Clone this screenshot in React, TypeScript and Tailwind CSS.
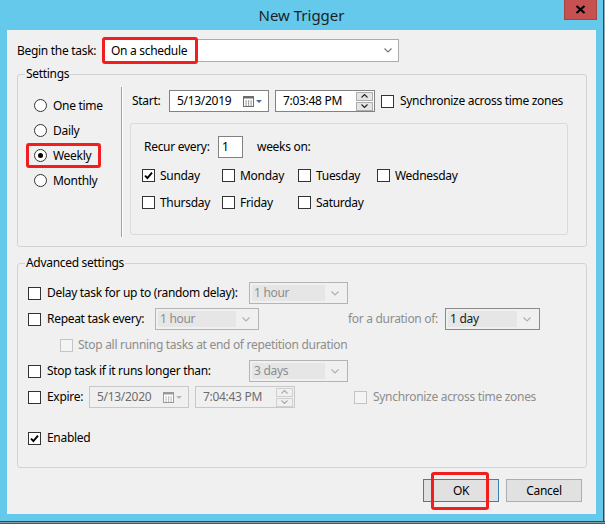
import clsx from "clsx"

const font = "font-['Segoe_UI','Noto_Sans',sans-serif]"

function Check({ checked, disabled }: { checked?: boolean; disabled?: boolean }) {
  return (
    <span
      className={clsx(
        "flex h-[13px] w-[13px] shrink-0 items-center justify-center border",
        disabled ? "border-[#c4c4c4] bg-[#f4f4f4]" : "border-[#333] bg-white",
      )}
    >
      {checked && (
        <svg width="9" height="9" viewBox="0 0 9 9">
          <path d="M1 4.6 L3.4 7 L8 1.6" stroke="#000" strokeWidth="1.9" fill="none" />
        </svg>
      )}
    </span>
  )
}

function Radio({ checked }: { checked?: boolean }) {
  return (
    <span className="flex h-[13px] w-[13px] shrink-0 items-center justify-center rounded-full border border-[#333] bg-white">
      {checked && <span className="h-[5px] w-[5px] rounded-full bg-black" />}
    </span>
  )
}

function Chevron({ color = "#7a7a7a" }: { color?: string }) {
  return (
    <svg width="8" height="5" viewBox="0 0 8 5">
      <path d="M0.5 0.5 L4 4 L7.5 0.5" stroke={color} strokeWidth="1.2" fill="none" />
    </svg>
  )
}

// disabled-looking dropdown, like the ones in Advanced settings
function Combo({ value, dark }: { value: string; dark?: boolean }) {
  return (
    <div
      className={clsx(
        "flex h-full w-full items-center border p-[2px]",
        dark ? "border-[#8a8a8a]" : "border-[#b4b4b4]",
      )}
    >
      <div
        className={clsx(
          "flex h-full flex-1 items-center bg-[#e6e6e6] pl-[2px] leading-none",
          dark ? "text-[#1a1a1a]" : "text-[#8d8d8d]",
        )}
      >
        {value}
      </div>
      <div className="flex w-[20px] justify-center">
        <Chevron color="#b0b0b0" />
      </div>
    </div>
  )
}

function Calendar({ disabled }: { disabled?: boolean }) {
  const c = disabled ? "#9a9a9a" : "#6d6d6d"
  return (
    <svg width="20" height="11" viewBox="0 0 20 11">
      <rect x="0.5" y="0.5" width="10" height="10" fill="#fff" stroke={c} />
      <rect x="0.5" y="0.5" width="10" height="2" fill={c} />
      {[2.5, 5, 7.5].map((x) =>
        [4.5, 6.5, 8.5].map((y) => <rect key={`${x}-${y}`} x={x} y={y} width="1.2" height="1.2" fill={c} />),
      )}
      <path d="M13 4 L19 4 L16 7 Z" fill={disabled ? "#b8b8b8" : "#4d6a93"} />
    </svg>
  )
}

function DateBox({ value, disabled }: { value: string; disabled?: boolean }) {
  return (
    <div
      className={clsx(
        "flex h-[22px] w-[100px] items-center justify-between border pl-[7px] pr-[5px]",
        disabled ? "border-[#c8c8c8] bg-[#f0f0f0] text-[#6d6d6d]" : "border-[#828282] bg-white text-black",
      )}
    >
      <span>{value}</span>
      <Calendar disabled={disabled} />
    </div>
  )
}

function SpinBtn({ up, disabled }: { up?: boolean; disabled?: boolean }) {
  return (
    <span
      className={clsx(
        "flex h-[9px] w-[17px] items-center justify-center border",
        disabled ? "border-[#cfcfcf] bg-[#f0f0f0]" : "border-[#adadad] bg-[#e5e5e5]",
      )}
    >
      <svg width="7" height="4" viewBox="0 0 7 4">
        <path
          d={up ? "M0.5 3.5 L3.5 0.5 L6.5 3.5" : "M0.5 0.5 L3.5 3.5 L6.5 0.5"}
          stroke={disabled ? "#a8a8a8" : "#222"}
          strokeWidth="1.1"
          fill="none"
        />
      </svg>
    </span>
  )
}

function TimeBox({ value, disabled }: { value: string; disabled?: boolean }) {
  return (
    <div
      className={clsx(
        "flex h-[22px] w-[100px] items-center justify-between border pl-[7px] pr-[1px]",
        disabled ? "border-[#c8c8c8] bg-[#f0f0f0] text-[#6d6d6d]" : "border-[#828282] bg-white text-black",
      )}
    >
      <span>{value}</span>
      <span className="flex flex-col gap-[1px]">
        <SpinBtn up disabled={disabled} />
        <SpinBtn disabled={disabled} />
      </span>
    </div>
  )
}

const legend = "ml-[7px] px-[1px] text-[12px] leading-[16px] text-black"

export default function App() {
  return (
    <div
      className={clsx(
        "flex h-[524px] w-[605px] flex-col overflow-hidden bg-[#64c9ea] text-[12px] tracking-[-0.3px] text-black",
        font,
      )}
    >
      <div className="flex h-[521px]">
        {/* window */}
        <div className="relative flex w-[603px] flex-col">
          <div className="flex h-[30px] items-center justify-center pt-[1px] text-[15px] tracking-normal text-[#1e1e1e]">
            New Trigger
          </div>
          <div className="absolute left-[564px] top-0 flex h-[20px] w-[33px] items-center justify-center border border-t-0 border-[#a8443f] bg-[#c75050]">
            <svg width="11" height="9" viewBox="0 0 11 9">
              <path d="M1.5 1 L9.5 8 M9.5 1 L1.5 8" stroke="#000" strokeWidth="2.2" />
            </svg>
          </div>

          {/* client area */}
          <div className="ml-[7px] flex h-[484px] w-[589px] flex-col bg-[#f0f0f0] px-[10px] pt-[9px]">
            <div className="flex items-center">
              <span className="w-[86px]">Begin the task:</span>
              <div className="relative flex h-[23px] w-[296px] items-center justify-between border border-[#acacac] bg-white pl-[7px] pr-[6px]">
                <span>On a schedule</span>
                <Chevron />
                <span className="absolute left-[-2px] top-[-3px] h-[27px] w-[96px] rounded-[3px] border-[3px] border-[#f21d1d]" />
              </div>
            </div>

            {/* Settings */}
            <fieldset className="mt-[4px] w-[570px] rounded-[3px] border border-[#d3d3d3] pb-[9px] pt-[5px]">
              <legend className={legend}>Settings</legend>
              <div className="flex h-[150px]">
                <div className="w-[103px] pl-[16px] pt-[6px]">
                  {["One time", "Daily", "Weekly", "Monthly"].map((l) => (
                    <div key={l} className="relative flex h-[25px] items-center gap-[6px]">
                      <Radio checked={l === "Weekly"} />
                      <span>{l}</span>
                      {l === "Weekly" && (
                        <span className="absolute left-[-8px] top-0 h-[25px] w-[75px] rounded-[3px] border-[3px] border-[#f21d1d]" />
                      )}
                    </div>
                  ))}
                </div>
                <div className="w-[2px] border-l border-r border-l-[#a0a0a0] border-r-white" />
                <div className="flex-1 pl-[7px] pt-[3px]">
                  <div className="flex h-[22px] items-center pl-[2px]">
                    <span className="w-[37px]">Start:</span>
                    <DateBox value="5/13/2019" />
                    <span className="w-[6px]" />
                    <TimeBox value="7:03:48 PM" />
                    <span className="ml-[6px] flex items-center gap-[6px]">
                      <Check />
                      <span>Synchronize across time zones</span>
                    </span>
                  </div>
                  <div className="mt-[11px] h-[112px] w-[438px] rounded-[3px] border border-[#dadada] pl-[11px] pt-[12px]">
                    <div className="flex h-[22px] items-center pl-[2px]">
                      <span className="w-[74px]">Recur every:</span>
                      <span className="flex h-[22px] w-[25px] items-center border border-[#828282] bg-white pl-[3px]">1</span>
                      <span className="ml-[14px]">weeks on:</span>
                    </div>
                    <div className="mt-[4px] grid grid-cols-[80px_76px_79px_auto]">
                      {[
                        ["Sunday", true],
                        ["Monday", false],
                        ["Tuesday", false],
                        ["Wednesday", false],
                        ["Thursday", false],
                        ["Friday", false],
                        ["Saturday", false],
                      ].map(([d, c]) => (
                        <div key={d as string} className="flex h-[27px] items-center gap-[5px]">
                          <Check checked={c as boolean} />
                          <span>{d as string}</span>
                        </div>
                      ))}
                    </div>
                  </div>
                </div>
              </div>
            </fieldset>

            {/* Advanced settings */}
            <fieldset className="mt-[8px] w-[570px] rounded-[3px] border border-[#d3d3d3] pb-[16px] pt-[9px]">
              <legend className={legend}>Advanced settings</legend>
              <div className="pl-[10px]">
                <div className="flex h-[26px] items-center">
                  <Check />
                  <span className="ml-[6px] w-[202px]">Delay task for up to (random delay):</span>
                  <div className="h-[22px] w-[99px]">
                    <Combo value="1 hour" />
                  </div>
                </div>
                <div className="flex h-[26px] items-center">
                  <Check />
                  <span className="ml-[6px] w-[108px]">Repeat task every:</span>
                  <div className="h-[22px] w-[104px]">
                    <Combo value="1 hour" />
                  </div>
                  <span className="ml-[89px] w-[97px] text-[#8d8d8d]">for a duration of:</span>
                  <div className="h-[22px] w-[95px]">
                    <Combo value="1 day" dark />
                  </div>
                </div>
                <div className="flex h-[26px] items-center gap-[5px] pl-[32px]">
                  <Check disabled />
                  <span className="text-[#8d8d8d]">Stop all running tasks at end of repetition duration</span>
                </div>
                <div className="flex h-[26px] items-center">
                  <Check />
                  <span className="ml-[6px] w-[202px]">Stop task if it runs longer than:</span>
                  <div className="h-[22px] w-[99px]">
                    <Combo value="3 days" />
                  </div>
                </div>
                <div className="flex h-[26px] items-center">
                  <Check />
                  <span className="ml-[6px] w-[42px]">Expire:</span>
                  <DateBox value="5/13/2020" disabled />
                  <span className="w-[6px]" />
                  <TimeBox value="7:04:43 PM" disabled />
                  <span className="ml-[59px] flex items-center gap-[6px]">
                    <Check disabled />
                    <span className="text-[#8d8d8d]">Synchronize across time zones</span>
                  </span>
                </div>
                <div className="mt-[15px] flex h-[26px] items-center gap-[6px]">
                  <Check checked />
                  <span>Enabled</span>
                </div>
              </div>
            </fieldset>

            {/* buttons */}
            <div className="mt-[11px] flex justify-end gap-[7px] pr-[4px]">
              <button className="relative flex h-[23px] w-[76px] items-center justify-center border border-[#3c7fb1] bg-[#e1e1e1]">
                OK
                <span className="absolute left-[7px] top-[-8px] h-[38px] w-[58px] rounded-[3px] border-[3px] border-[#f21d1d]" />
              </button>
              <button className="flex h-[23px] w-[76px] items-center justify-center border border-[#adadad] bg-[#e1e1e1]">
                Cancel
              </button>
            </div>
          </div>
        </div>
        <div className="w-[2px] border-l border-[#3a4650] bg-[#9aa6ae]" />
      </div>
      <div className="h-[1px] bg-[#3a4650]" />
      <div className="h-[1px] bg-[#8e9aa3]" />
      <div className="h-[1px] bg-[#4a5660]" />
    </div>
  )
}
